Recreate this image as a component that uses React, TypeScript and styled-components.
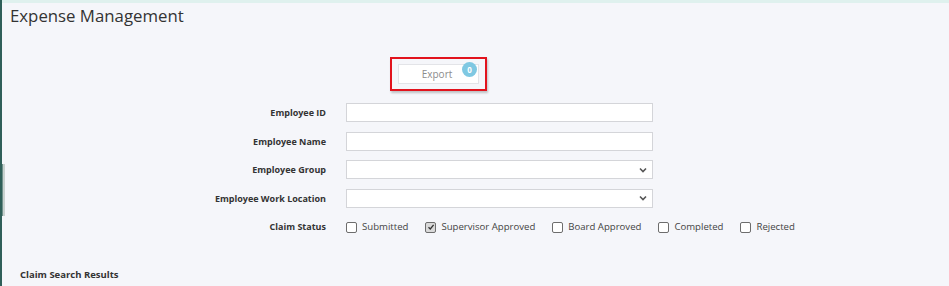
import React from 'react'
import styled, { createGlobalStyle } from 'styled-components'

const GlobalStyle = createGlobalStyle`
  html, body {
    margin: 0;
    padding: 0;
    background: #f5f6fa;
    font-family: 'Open Sans', 'Noto Sans', sans-serif;
  }
`

const Page = styled.div`
  display: flex;
  height: 286px;
  overflow: hidden;
  background: #f5f6fa;
`

const Rail = styled.div`
  width: 2px;
  flex-shrink: 0;
  background: #2f5f59;
`

const Grip = styled.div`
  margin-top: 164px;
  width: 5px;
  height: 52px;
  background: linear-gradient(to right, #2f5f59 0 2px, #6f8f8a 2px 3px, #c9d2d0 3px 5px);
`

const Main = styled.div`
  flex: 1;
  display: flex;
  flex-direction: column;
`

const TopStrip = styled.div`
  height: 3px;
  background: #dff1ee;
`

const Title = styled.h1`
  margin: 3px 0 0 8px;
  font-size: 16.8px;
  line-height: 20px;
  font-weight: 400;
  color: #333333;
`

const ExportArea = styled.div`
  margin: 31px 0 0 388px;
  width: 93px;
  height: 30px;
  border: 2px solid #e2131d;
  box-shadow: 1px 2px 2px rgba(0, 0, 0, 0.22);
  display: flex;
  align-items: center;
  justify-content: center;
`

const ExportButton = styled.div`
  position: relative;
  width: 76px;
  height: 18px;
  background: #ffffff;
  border: 1px solid #e3e4e8;
  display: flex;
  align-items: center;
  justify-content: center;
  font-size: 10px;
  color: #8c8c8c;
  padding-right: 3px;
`

const Badge = styled.span`
  position: absolute;
  top: -3px;
  right: 1px;
  width: 15px;
  height: 15px;
  border-radius: 50%;
  background: #7fc8e2;
  color: #ffffff;
  font-size: 8px;
  font-weight: 700;
  display: flex;
  align-items: center;
  justify-content: center;
`

const Form = styled.div`
  margin: 12px 0 0 174px;
  display: grid;
  grid-template-columns: 150px 307px;
  column-gap: 20px;
  row-gap: 9.5px;
  align-items: center;
`

const Label = styled.label`
  text-align: right;
  font-size: 9px;
  font-weight: 700;
  color: #333333;
  white-space: nowrap;
`

const TextBox = styled.div`
  height: 17px;
  background: #ffffff;
  border: 1px solid #d4d5d9;
`

const SelectBox = styled(TextBox)`
  display: flex;
  align-items: center;
  justify-content: flex-end;
  padding-right: 5px;
  color: #555555;
`

const StatusRow = styled.div`
  display: flex;
  align-items: center;
  gap: 17px;
  height: 18px;
`

const Option = styled.div`
  display: flex;
  align-items: center;
  gap: 5px;
  font-size: 9.6px;
  color: #444444;
  white-space: nowrap;
`

const Box = styled.span<{ $checked?: boolean }>`
  width: 9px;
  height: 9px;
  margin-top: 2px;
  border: 1px solid #6d6d6d;
  border-radius: 2px;
  background: ${p => (p.$checked ? '#d9d9d9' : '#ffffff')};
  display: flex;
  align-items: center;
  justify-content: center;
`

const ResultsTitle = styled.div`
  margin: 33px 0 0 18px;
  font-size: 9.5px;
  font-weight: 700;
  color: #333333;
`

const Chevron = () => (
  <svg width="8" height="6" viewBox="0 0 8 6">
    <path d="M1 1.5 L4 4.5 L7 1.5" fill="none" stroke="#555" strokeWidth="1.6" />
  </svg>
)

const Check = () => (
  <svg width="8" height="8" viewBox="0 0 8 8">
    <path d="M1.5 4.2 L3.3 6 L6.6 1.8" fill="none" stroke="#333" strokeWidth="1.3" />
  </svg>
)

const statuses = [
  { name: 'Submitted', checked: false },
  { name: 'Supervisor Approved', checked: true },
  { name: 'Board Approved', checked: false },
  { name: 'Completed', checked: false },
  { name: 'Rejected', checked: false },
]

const App = () => {
  return (
    <Page>
      <GlobalStyle />
      <Rail>
        <Grip />
      </Rail>
      <Main>
        <TopStrip />
        <Title>Expense Management</Title>
        <ExportArea>
          <ExportButton>
            Export
            <Badge>0</Badge>
          </ExportButton>
        </ExportArea>
        <Form>
          <Label>Employee ID</Label>
          <TextBox />
          <Label>Employee Name</Label>
          <TextBox />
          <Label>Employee Group</Label>
          <SelectBox>
            <Chevron />
          </SelectBox>
          <Label>Employee Work Location</Label>
          <SelectBox>
            <Chevron />
          </SelectBox>
          <Label>Claim Status</Label>
          <StatusRow>
            {statuses.map(s => (
              <Option key={s.name}>
                <Box $checked={s.checked}>{s.checked && <Check />}</Box>
                {s.name}
              </Option>
            ))}
          </StatusRow>
        </Form>
        <ResultsTitle>Claim Search Results</ResultsTitle>
      </Main>
    </Page>
  )
}

export default App
